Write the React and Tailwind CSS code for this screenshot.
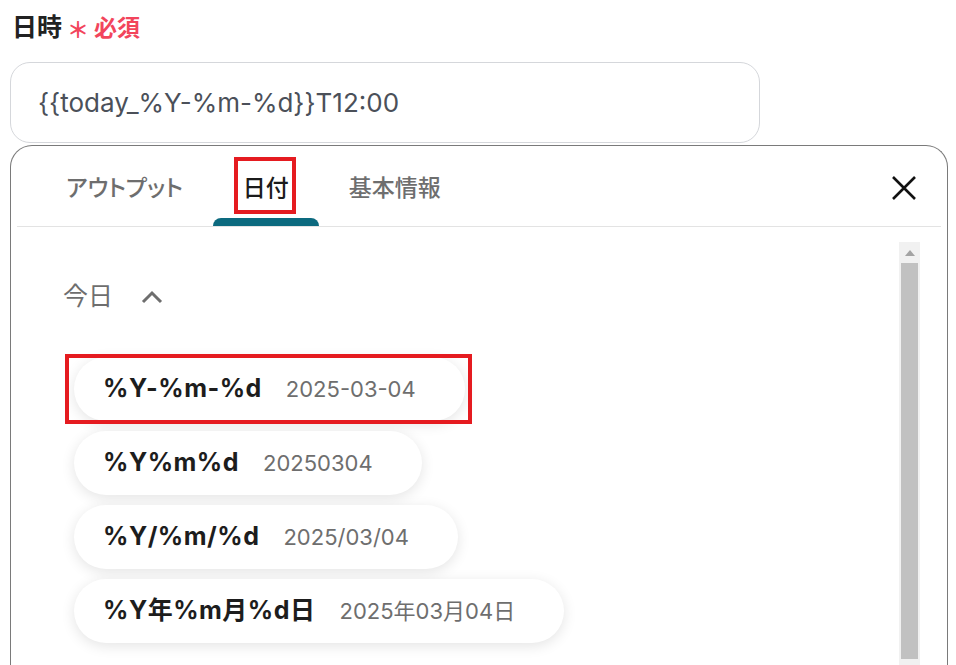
import React from "react";

const formats = [
  { code: "%Y-%m-%d", value: "2025-03-04" },
  { code: "%Y%m%d", value: "20250304" },
  { code: "%Y/%m/%d", value: "2025/03/04" },
  { code: "%Y年%m月%d日", value: "2025年03月04日" },
];

const tabs = ["アウトプット", "日付", "基本情報"];

export default function App() {
  return (
    <div className="relative h-[665px] overflow-hidden bg-white pl-[10px] font-['Inter','Noto_Sans_CJK_JP',sans-serif]">
      <div className="flex h-[62px] items-center pb-[6px] pl-[2px]">
        <span className="text-[25px] font-bold text-[#222]">日時</span>
        <span className="ml-[5px] mt-[4px] text-[22px] font-bold text-[#f2455c]">＊</span>
        <span className="ml-[5px] text-[23px] font-bold text-[#f2455c]">必須</span>
      </div>

      <div className="flex h-[81px] w-[750px] items-center rounded-[20px] border border-[#d5d7db] px-[27px] text-[26px] text-[#4b5059]">
        {"{{today_%Y-%m-%d}}T12:00"}
      </div>

      <div className="mt-[2px] w-[938px] rounded-t-[22px] border border-b-0 border-[#7a7a7a] bg-white">
        <div className="flex h-[80px] items-stretch pl-[25px]">
          {tabs.map((t, i) => (
            <div
              key={t}
              className={
                "relative flex items-center px-[30px] pt-[4px] text-[23px] font-medium [font-feature-settings:'palt'] " +
                (i === 1 ? "text-[#1b1b1b]" : "text-[#6e6e6e]")
              }
            >
              {t}
              {i === 1 && (
                <div className="absolute bottom-0 left-0 right-0 h-[8px] rounded-t-[8px] bg-[#0c6a7f]" />
              )}
            </div>
          ))}
          <div className="ml-auto mr-[30px] flex items-center pt-[4px]">
            <svg width="26" height="26" viewBox="0 0 26 26">
              <path d="M2 2 L24 24 M24 2 L2 24" stroke="#111" strokeWidth="2.6" fill="none" />
            </svg>
          </div>
        </div>
        <div className="mx-[6px] h-px bg-[#e3e3e3]" />

        <div className="flex">
          <div className="flex-1 pl-[52px] pt-[50px]">
            <div className="flex h-[40px] items-center text-[25px] text-[#6e6e6e]">
              今日
              <svg className="ml-[28px]" width="22" height="14" viewBox="0 0 22 14">
                <path d="M2 12 L11 3 L20 12" stroke="#6e6e6e" strokeWidth="3" fill="none" />
              </svg>
            </div>
            <div className="ml-[11px] mt-[40px] flex flex-col items-start gap-[10px]">
              {formats.map((f) => (
                <div
                  key={f.code}
                  className="flex h-[64px] items-center gap-[24px] rounded-full bg-white pl-[29px] pr-[49px] shadow-[0_3px_14px_rgba(0,0,0,0.11)]"
                >
                  <span className="text-[25px] font-bold tracking-[0.5px] text-[#1d1d1d]">{f.code}</span>
                  <span className="text-[22px] text-[#6e6e6e]">{f.value}</span>
                </div>
              ))}
            </div>
          </div>

          <div className="mr-[27px] mt-[15px] flex h-[440px] w-[21px] flex-col items-center bg-[#f1f1f1]">
            <div className="flex h-[21px] items-center">
              <svg width="10" height="6" viewBox="0 0 10 6">
                <path d="M0 6 L5 0 L10 6 Z" fill="#a3a3a3" />
              </svg>
            </div>
            <div className="h-[396px] w-[17px] bg-[#c1c1c1]" />
          </div>
        </div>
      </div>

      <div className="absolute left-[234px] top-[157px] h-[57px] w-[62px] border-4 border-[#e51b20]" />
      <div className="absolute left-[65px] top-[354px] h-[70px] w-[407px] border-4 border-[#e51b20]" />
    </div>
  );
}
